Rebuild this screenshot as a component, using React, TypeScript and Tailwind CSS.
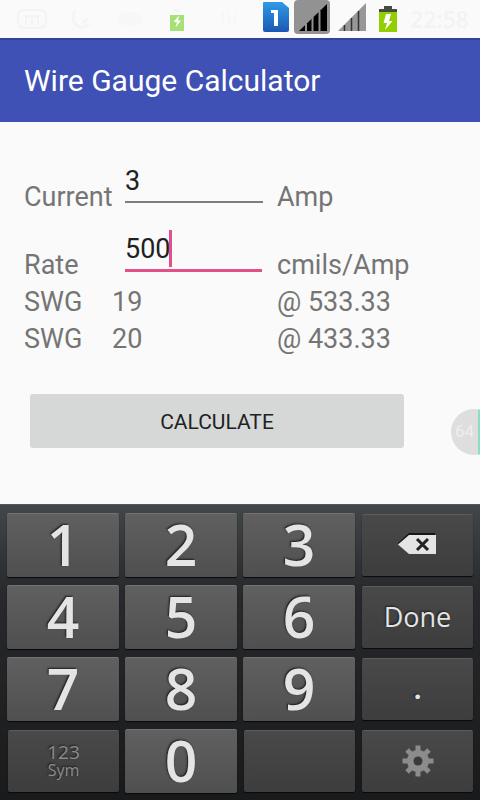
import { useState } from "react";
import type { ReactNode } from "react";

function StatusBar() {
  return (
    <header className="flex h-[38px] items-center bg-[#fafafa] pr-[11px] pl-4 font-['Open_Sans',sans-serif]">
      <svg className="h-6 w-8" viewBox="0 0 32 24" fill="none" stroke="#f3f3f3" strokeWidth="2" aria-hidden="true">
        <rect x="2" y="3" width="28" height="18" rx="6" />
        <path d="M10 18V9h12v9M16 9v9" />
      </svg>
      <svg className="ml-5 h-6 w-6" viewBox="0 0 24 24" fill="none" stroke="#f4f4f4" strokeWidth="3" aria-hidden="true">
        <path d="M7 4C2 11 7 21 16 20l5-3M14 16l6-4" />
      </svg>
      <svg className="ml-6 h-5 w-7" viewBox="0 0 28 20" aria-hidden="true">
        <ellipse cx="14" cy="10" rx="13" ry="7" fill="#f7f7f7" />
      </svg>
      <svg className="ml-[25px] h-7 w-4" viewBox="0 0 16 28" aria-hidden="true">
        <path d="M5 7V4h6v3" fill="#f4f4f4" />
        <rect x="1" y="10" width="14" height="16" fill="#a8e078" />
        <path d="M10 10.500L4.500 17H8l-1.500 5.500 5.500-7H9z" fill="#fff" />
      </svg>
      <svg className="ml-9 h-5 w-5" viewBox="0 0 20 20" fill="none" stroke="#f7f7f7" strokeWidth="2" aria-hidden="true">
        <path d="M2 3v14M8 3v14M14 3v14" />
      </svg>
      <div className="ml-auto flex items-center">
        <svg className="-mt-1 h-8 w-7" viewBox="0 0 28 32" aria-label="SIM 1">
          <defs>
            <linearGradient id="sim" x1="0" y1="0" x2="0" y2="1">
              <stop offset="0" stopColor="#2f9ae6" />
              <stop offset="1" stopColor="#1b57b4" />
            </linearGradient>
          </defs>
          <path d="M2 1h18l7 6v22q0 2-2 2H3q-2 0-2-2V2q0-1 1-1z" fill="url(#sim)" />
          <path d="M9 9h7v16h-4V12H9z" fill="#fff" />
        </svg>
        <svg className="-mt-1 ml-1 h-[34px] w-9" viewBox="0 0 36 34" aria-hidden="true">
          <rect width="36" height="34" rx="4" fill="#929292" />
          <path d="M5 31L33 4v27z" fill="#000" />
          <path d="M12 23.500V31M18.500 17V31M25.500 11V31" stroke="#929292" strokeWidth="2" />
        </svg>
        <svg className="-mt-1 ml-2 h-7 w-7" viewBox="0 0 28 28" aria-hidden="true">
          <path d="M0 28L28 0v28z" fill="#979797" />
          <path d="M6.500 22v6M13.500 15v13M20.500 8v20" stroke="#333" strokeWidth="1.500" />
        </svg>
        <svg className="ml-3 h-7 w-5" viewBox="0 0 20 28" aria-hidden="true">
          <path d="M1 4h5V1h8v3h5v4H1z" fill="#454d42" />
          <rect x="1" y="7" width="18" height="20" fill="#92ce00" />
          <path d="M13 9H8l-2.500 9H9l-2 7 7.500-9H11z" fill="#fff" />
        </svg>
        <time className="ml-3 text-[23px] leading-8 font-semibold text-[#f3f3f3]">22:58</time>
      </div>
    </header>
  );
}

const keyBase =
  "flex items-center justify-center rounded-[2px] [text-shadow:-1px_-1px_2px_#1c1c1c]";

function DigitKey({ children }: { children: ReactNode }) {
  return (
    <button
      type="button"
      className={`${keyBase} h-16 border-t border-[#737373] bg-linear-to-b from-[#606060] to-[#4f4f4f] pb-0.5 text-[57px] leading-none font-semibold text-[#e4e4e4] shadow-[0_1px_1px_#08090a]`}
    >
      {children}
    </button>
  );
}

function ActionKey({ children, label }: { children?: ReactNode; label?: string }) {
  return (
    <button
      type="button"
      aria-label={label}
      className={`${keyBase} mt-px ml-px h-[62px] flex-col border-t border-[#5c5c5c] bg-linear-to-b from-[#494949] to-[#3d3d3d] pb-0.5 text-[27px] leading-none text-[#e4e4e4] shadow-[0_1px_1px_#08090a]`}
    >
      {children}
    </button>
  );
}

function Keyboard() {
  return (
    <section
      aria-label="Number keyboard"
      className="mt-auto grid grid-cols-4 gap-x-1.5 gap-y-2 border-t border-[#54575a] bg-linear-to-b from-[#42474a] via-[#27292c] via-30% to-[#191a1b] px-[7px] pt-2 pb-[7px] font-['Open_Sans',sans-serif]"
    >
      <DigitKey>1</DigitKey>
      <DigitKey>2</DigitKey>
      <DigitKey>3</DigitKey>
      <ActionKey label="Delete">
        <svg className="h-6 w-10" viewBox="0 0 40 24" aria-hidden="true">
          <path d="M1 11L12 1h25" fill="none" stroke="#161616" strokeWidth="3" />
          <path d="M0 11.500L11 2h27v19H11z" fill="#e4e4e4" />
          <path d="M19 6l11 11M30 6L19 17" stroke="#222" strokeWidth="3" />
        </svg>
      </ActionKey>
      <DigitKey>4</DigitKey>
      <DigitKey>5</DigitKey>
      <DigitKey>6</DigitKey>
      <ActionKey>Done</ActionKey>
      <DigitKey>7</DigitKey>
      <DigitKey>8</DigitKey>
      <DigitKey>9</DigitKey>
      <ActionKey>
        <span className="font-bold">.</span>
      </ActionKey>
      <ActionKey>
        <span className="text-[19px] leading-[18px] text-[#8c8c8c]">123</span>
        <span className="text-[16px] leading-[18px] text-[#8c8c8c]">Sym</span>
      </ActionKey>
      <DigitKey>0</DigitKey>
      <ActionKey label="Space" />
      <ActionKey label="Settings">
        <svg className="h-8 w-8" viewBox="-16 -16 32 32" fill="#8c8c8c" aria-hidden="true">
          {[0, 45, 90, 135].map((angle) => (
            <rect key={angle} x="-2.500" y="-15.500" width="5" height="31" transform={`rotate(${angle})`} />
          ))}
          <circle r="11" />
          <circle r="4.500" fill="#3a3a3a" />
        </svg>
      </ActionKey>
    </section>
  );
}

const row = "grid grid-cols-[88px_165px_1fr]";
const field =
  "block w-full bg-transparent p-0 text-[#212121] outline-none";

export default function App() {
  const [current, setCurrent] = useState("3");
  const [rate, setRate] = useState("500");

  return (
    <div className="relative flex min-h-screen flex-col overflow-hidden bg-[#fafafa] font-[Roboto,sans-serif]">
      <StatusBar />
      <div className="flex h-[84px] items-center border-t-2 border-[#35439a] bg-[#3f51b5] px-6">
        <h1 className="text-[30px] leading-9 text-white">Wire Gauge Calculator</h1>
      </div>

      <form
        className="px-6 pt-[26px] pb-14 text-[27px] leading-[37px] text-[#757575]"
        onSubmit={(e) => e.preventDefault()}
      >
        <div className={`${row} h-[68px] items-end`}>
          <label htmlFor="current">Current</label>
          <div className="pr-3.5 pb-[13px] pl-[13px]">
            <input
              id="current"
              inputMode="decimal"
              className={`${field} h-[41px] border-b-2 border-[#7d7d7d] pb-0.5`}
              value={current}
              onChange={(e) => setCurrent(e.target.value)}
            />
          </div>
          <span>Amp</span>
        </div>
        <div className={`${row} h-[68px] items-end`}>
          <label htmlFor="rate">Rate</label>
          <div className="relative pr-[15px] pb-3 pl-[13px]">
            <input
              id="rate"
              inputMode="decimal"
              className={`${field} h-[42px] border-b-3 border-[#e2508a] pb-0.5`}
              value={rate}
              onChange={(e) => setRate(e.target.value)}
            />
            <span className="absolute top-0 left-[57px] h-[37px] w-[3px] bg-[#e2508a]" />
          </div>
          <span>cmils/Amp</span>
        </div>
        <div className={row}>
          <span>SWG</span>
          <output>19</output>
          <output>@ 533.33</output>
        </div>
        <div className={row}>
          <span>SWG</span>
          <output>20</output>
          <output>@ 433.33</output>
        </div>
        <div className="mt-9 mr-13 ml-1.5">
          <button
            type="submit"
            className="h-[54px] w-full rounded-[3px] bg-[#d6d8d7] pt-0.5 text-[21px] leading-7 text-[#212121]"
          >
            CALCULATE
          </button>
        </div>
      </form>

      <div className="absolute top-[409px] -right-[17px] flex size-[46px] items-center overflow-hidden rounded-full bg-[#dedede] pl-1 text-[17px] text-[#eeeeee]">
        64
        <span className="absolute inset-y-0 right-0 w-[19px] bg-[#8edcc5]" />
      </div>

      <Keyboard />
    </div>
  );
}
